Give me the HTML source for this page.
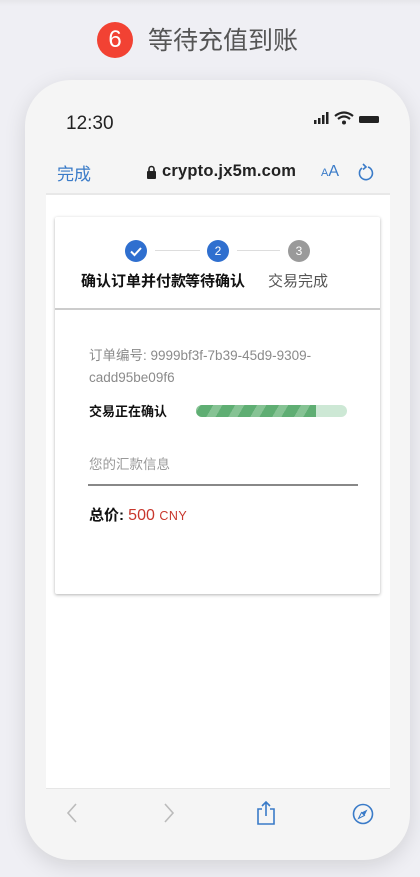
<!DOCTYPE html>
<html><head><meta charset="utf-8"><style>
*{margin:0;padding:0;box-sizing:border-box}
body{width:420px;height:877px;background:#efeff4;font-family:"Liberation Sans","Noto Sans CJK SC",sans-serif;position:relative;overflow:hidden}
.a{position:absolute}
.phone{left:25px;top:80px;width:385px;height:780px;background:#f5f5f5;border-radius:46px;box-shadow:0 6px 22px rgba(0,0,0,.12)}
.screen{left:46px;top:195px;width:344px;height:593px;background:#fff}
.card{left:55px;top:217px;width:325px;height:377px;background:#fff;box-shadow:0 1px 3px rgba(0,0,0,.3);border-radius:2px}
</style></head><body>
<div class="a" style="left:0;top:0;width:420px;height:6px;background:linear-gradient(#e6e6ea,#efeff4)"></div>
<div class="a" style="left:97px;top:22px;width:36px;height:36px;border-radius:50%;background:#f24233;color:#fff;font-size:24px;text-align:center;line-height:36px">6</div>
<div class="a" style="left:148px;top:24px;font-size:25px;color:#555;line-height:34px">等待充值到账</div>
<div class="a phone"></div>
<div class="a" style="left:66px;top:113px;font-size:19px;color:#222">12:30</div>
<svg class="a" style="left:313px;top:111px" width="68" height="16" viewBox="0 0 68 16">
<rect x="1" y="9" width="2.5" height="4" fill="#222"/><rect x="5" y="7" width="2.5" height="6" fill="#222"/><rect x="9" y="4" width="2.5" height="9" fill="#222"/><rect x="13" y="1" width="2.5" height="12" fill="#222"/>
<path d="M22 5 Q31 -2 40 5" stroke="#222" stroke-width="2.2" fill="none"/><path d="M25 8 Q31 3 37 8" stroke="#222" stroke-width="2.2" fill="none"/><circle cx="31" cy="11.5" r="2" fill="#222"/>
<rect x="46" y="5" width="20" height="7" rx="1.5" fill="#222"/></svg>
<div class="a" style="left:57px;top:160px;font-size:17px;color:#3a7bc8">完成</div>
<svg class="a" style="left:146px;top:165px" width="11" height="14"><rect x="1" y="6" width="9" height="8" rx="1" fill="#222"/><path d="M3 6V4a2.5 2.5 0 0 1 5 0v2" stroke="#222" stroke-width="1.6" fill="none"/></svg>
<div class="a" style="left:162px;top:162px;font-size:16.5px;color:#222;font-weight:bold;letter-spacing:.2px">crypto.jx5m.com</div>
<div class="a" style="left:321px;top:163px;color:#3a7bc8"><span style="font-size:11px">A</span><span style="font-size:16px">A</span></div>
<svg class="a" style="left:357px;top:162px" width="18" height="20" viewBox="0 0 18 20"><path d="M11 5 A6.5 6.5 0 1 1 5 6" stroke="#3a7bc8" stroke-width="1.6" fill="none"/><path d="M6 2 L9 5 L6 7.5" stroke="#3a7bc8" stroke-width="1.6" fill="none"/></svg>
<div class="a" style="left:46px;top:193px;width:344px;height:2px;background:#e8e8e8"></div>
<div class="a screen"></div>
<div class="a card"></div>
<div class="a" style="left:125px;top:240px;width:22px;height:22px;border-radius:50%;background:#2f6fcf"></div>
<svg class="a" style="left:125px;top:240px" width="22" height="22"><path d="M6 11.5 L9.5 15 L16 8" stroke="#fff" stroke-width="2" fill="none"/></svg>
<div class="a" style="left:155px;top:250px;width:45px;height:1px;background:#ddd"></div>
<div class="a" style="left:207px;top:240px;width:22px;height:22px;border-radius:50%;background:#2f6fcf;color:#fff;font-size:12px;text-align:center;line-height:22px">2</div>
<div class="a" style="left:237px;top:250px;width:43px;height:1px;background:#ddd"></div>
<div class="a" style="left:288px;top:240px;width:22px;height:22px;border-radius:50%;background:#9a9a9a;color:#fff;font-size:12px;text-align:center;line-height:22px">3</div>
<div class="a" style="left:81px;top:270px;font-size:15px;color:#111;font-weight:bold;white-space:nowrap">确认订单并付款</div>
<div class="a" style="left:185px;top:270px;font-size:15px;color:#111;font-weight:bold;white-space:nowrap">等待确认</div>
<div class="a" style="left:268px;top:270px;font-size:15px;color:#555">交易完成</div>
<div class="a" style="left:55px;top:308px;width:325px;height:2px;background:#ccc"></div>
<div class="a" style="left:89px;top:345px;font-size:13.5px;color:#8a8a8a;line-height:22px;width:270px">订单编号: 9999bf3f-7b39-45d9-9309-<br>cadd95be09f6</div>
<div class="a" style="left:89px;top:401px;font-size:13px;color:#111;font-weight:bold">交易正在确认</div>
<div class="a" style="left:196px;top:405px;width:151px;height:12px;border-radius:6px;background:#cde8d5;overflow:hidden"><div style="width:120px;height:12px;background:repeating-linear-gradient(-60deg,#5fae73 0 11px,#86c394 11px 19px)"></div></div>
<div class="a" style="left:89px;top:453px;font-size:13.5px;color:#999">您的汇款信息</div>
<div class="a" style="left:88px;top:484px;width:270px;height:1.5px;background:#888"></div>
<div class="a" style="left:89px;top:504px;font-size:15px;color:#111;font-weight:bold">总价: <span style="color:#c8372d;font-weight:normal;font-size:16px">500 <span style="font-size:12.5px;letter-spacing:.5px">CNY</span></span></div>
<div class="a" style="left:46px;top:788px;width:344px;height:1px;background:#e6e6e6"></div>
<svg class="a" style="left:64px;top:801px" width="16" height="24"><path d="M12 3 L4 12 L12 21" stroke="#bbb" stroke-width="1.6" fill="none"/></svg>
<svg class="a" style="left:161px;top:801px" width="16" height="24"><path d="M4 3 L12 12 L4 21" stroke="#bbb" stroke-width="1.6" fill="none"/></svg>
<svg class="a" style="left:255px;top:800px" width="22" height="26"><path d="M7 9 H3 V24 H19 V9 H15" stroke="#3a7bc8" stroke-width="1.6" fill="none"/><path d="M11 16 V2 M7 6 L11 2 L15 6" stroke="#3a7bc8" stroke-width="1.6" fill="none"/></svg>
<svg class="a" style="left:352px;top:803px" width="22" height="22"><circle cx="11" cy="11" r="9.5" stroke="#3a7bc8" stroke-width="1.6" fill="none"/><path d="M15.5 6.5 L12.5 12.5 L9.5 9.5 Z" fill="#3a7bc8"/><path d="M6.5 15.5 L9.5 9.5 L12.5 12.5 Z" stroke="#3a7bc8" stroke-width="1" fill="none"/></svg>
</body></html>
